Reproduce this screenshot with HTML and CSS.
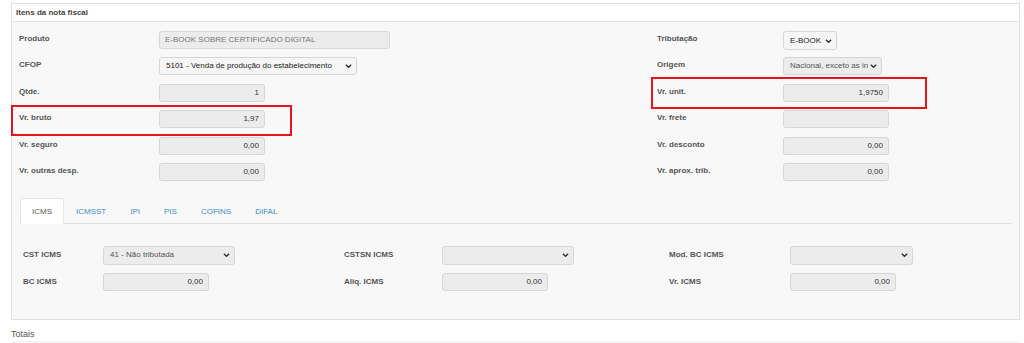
FILE: index.html
```html
<!DOCTYPE html>
<html lang="pt-BR">
<head>
    <meta charset="UTF-8">
    <meta name="viewport" content="width=device-width, initial-scale=1.0">
    <title>Itens da nota fiscal</title>
    <link rel="stylesheet" href="styles.css">
</head>
<body>
    <div class="panel">
        <div class="panel-heading">Itens da nota fiscal</div>
        <div class="panel-body">
            <div class="fields">
                <div class="field">
                    <label>Produto</label>
                    <div class="input input-text disabled w-produto">E-BOOK SOBRE CERTIFICADO DIGITAL</div>
                </div>
                <div class="field right">
                    <label>Tributação</label>
                    <div class="select enabled w-trib"><span>E-BOOK</span><svg viewBox="0 0 8 6"><path d="M1 1.5 L4 4.5 L7 1.5"/></svg></div>
                </div>
                <div class="field">
                    <label>CFOP</label>
                    <div class="select enabled w-cfop"><span>5101 - Venda de produção do estabelecimento</span><svg viewBox="0 0 8 6"><path d="M1 1.5 L4 4.5 L7 1.5"/></svg></div>
                </div>
                <div class="field right">
                    <label>Origem</label>
                    <div class="select w-origem"><span>Nacional, exceto as in</span><svg viewBox="0 0 8 6"><path d="M1 1.5 L4 4.5 L7 1.5"/></svg></div>
                </div>
                <div class="field">
                    <label>Qtde.</label>
                    <div class="input">1</div>
                </div>
                <div class="field right">
                    <label>Vr. unit.</label>
                    <div class="input">1,9750</div>
                    <span class="highlight hl-right"></span>
                </div>
                <div class="field">
                    <label>Vr. bruto</label>
                    <div class="input">1,97</div>
                    <span class="highlight hl-left"></span>
                </div>
                <div class="field right">
                    <label>Vr. frete</label>
                    <div class="input"></div>
                </div>
                <div class="field">
                    <label>Vr. seguro</label>
                    <div class="input">0,00</div>
                </div>
                <div class="field right">
                    <label>Vr. desconto</label>
                    <div class="input">0,00</div>
                </div>
                <div class="field">
                    <label>Vr. outras desp.</label>
                    <div class="input">0,00</div>
                </div>
                <div class="field right">
                    <label>Vr. aprox. trib.</label>
                    <div class="input">0,00</div>
                </div>
            </div>

            <ul class="tabs">
                <li class="active">ICMS</li>
                <li>ICMSST</li>
                <li>IPI</li>
                <li>PIS</li>
                <li>COFINS</li>
                <li>DIFAL</li>
            </ul>

            <div class="tax-grid">
                <div class="tax-field col1">
                    <label>CST ICMS</label>
                    <div class="select tall w-cst"><span>41 - Não tributada</span><svg viewBox="0 0 8 6"><path d="M1 1.5 L4 4.5 L7 1.5"/></svg></div>
                </div>
                <div class="tax-field col2">
                    <label>CSTSN ICMS</label>
                    <div class="select tall w-cst"><span></span><svg viewBox="0 0 8 6"><path d="M1 1.5 L4 4.5 L7 1.5"/></svg></div>
                </div>
                <div class="tax-field col3">
                    <label>Mod. BC ICMS</label>
                    <div class="select tall w-mod"><span></span><svg viewBox="0 0 8 6"><path d="M1 1.5 L4 4.5 L7 1.5"/></svg></div>
                </div>
                <div class="tax-field col1">
                    <label>BC ICMS</label>
                    <div class="input">0,00</div>
                </div>
                <div class="tax-field col2">
                    <label>Aliq. ICMS</label>
                    <div class="input">0,00</div>
                </div>
                <div class="tax-field col3">
                    <label>Vr. ICMS</label>
                    <div class="input">0,00</div>
                </div>
            </div>
        </div>
    </div>

    <div class="totais">Totais</div>
    <div class="totais-bar"></div>
</body>
</html>
```

FILE: styles.css
```css
body {
    font-family: "Liberation Sans", Arial, sans-serif;
    margin: 0;
    padding: 3px 0 0 11px;
    background-color: #fff;
    color: #333;
    font-size: 8px;
}
.panel {
    width: 1009px;
    box-sizing: border-box;
    border: 1px solid #e0e0e0;
}
.panel-heading {
    height: 17px;
    line-height: 18px;
    padding-left: 4px;
    background: #fff;
    border-bottom: 1px solid #e2e2e2;
    font-weight: bold;
    color: #444;
}
.panel-body {
    background: #f8f8f8;
    padding: 9px 7px 28px 7px;
}
.fields {
    display: grid;
    grid-template-columns: 638px 1fr;
    row-gap: 8.4px;
}
.field {
    position: relative;
    display: flex;
    align-items: flex-start;
    height: 18px;
}
.field label {
    width: 140px;
    line-height: 15px;
    font-weight: bold;
    color: #555;
}
.field.right label {
    width: 126px;
}
.input, .select {
    box-sizing: border-box;
    height: 18px;
    line-height: 16px;
    border: 1px solid #d6d6d6;
    border-radius: 3px;
    background: #ececec;
    color: #333;
    white-space: nowrap;
    overflow: hidden;
}
.input {
    width: 106px;
    padding: 0 5px;
    text-align: right;
}
.input-text {
    text-align: left;
}
.disabled {
    color: #777;
}
.select {
    display: flex;
    align-items: center;
    padding: 0 4px 0 6px;
    color: #555;
}
.select span {
    flex: 1;
    overflow: hidden;
    white-space: nowrap;
}
.select svg {
    width: 7px;
    height: 6px;
    flex: none;
    margin-left: 2px;
    fill: none;
    stroke: #333;
    stroke-width: 1.6;
}
.select.enabled {
    background: #f6f6f6;
    color: #222;
}
.select.tall {
    height: 19px;
}
.w-produto { width: 231px; }
.w-cfop { width: 198px; }
.w-trib { width: 54px; height: 19px; }
.w-origem { width: 99px; }
.w-cst { width: 132px; }
.w-mod { width: 123px; }

.highlight {
    position: absolute;
    box-sizing: border-box;
    border: 2px solid #e8131b;
    pointer-events: none;
}
.hl-left {
    left: -8px;
    top: -5px;
    width: 281px;
    height: 31px;
}
.hl-right {
    left: -6px;
    top: -7px;
    width: 276px;
    height: 32px;
}

.tabs {
    list-style: none;
    margin: 17px 0 0 0;
    padding: 0 0 0 1px;
    display: flex;
    border-bottom: 1px solid #e0e0e0;
}
.tabs li {
    height: 25px;
    line-height: 25px;
    padding: 0 11px;
    color: #3c8dcc;
    margin-bottom: -1px;
    border: 1px solid transparent;
    border-bottom: none;
    box-sizing: border-box;
}
.tabs li.active {
    background: #fff;
    color: #555;
    border-color: #e6e6e6;
    border-radius: 3px 3px 0 0;
    height: 26px;
}

.tax-grid {
    display: grid;
    grid-template-columns: 321px 325px 1fr;
    grid-auto-rows: auto;
    row-gap: 8px;
    margin-top: 22px;
    padding-left: 4px;
}
.tax-field {
    display: flex;
    align-items: flex-start;
}
.tax-field label {
    font-weight: bold;
    color: #555;
    line-height: 17px;
}
.col1 label { width: 80px; }
.col2 label { width: 98px; }
.col3 label { width: 121px; }

.totais {
    margin-top: 8px;
    font-size: 9px;
    color: #555;
    line-height: 12px;
}
.totais-bar {
    margin-top: 1px;
    height: 10px;
    width: 1009px;
    background: #f5f5f5;
}
```
